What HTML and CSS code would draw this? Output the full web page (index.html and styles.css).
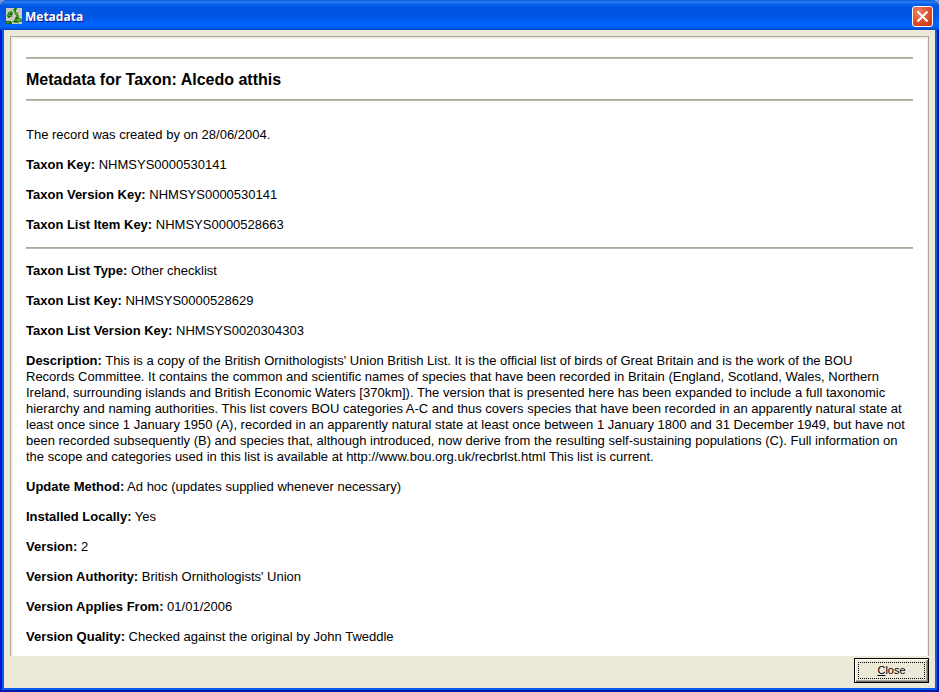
FILE: index.html
```html
<!DOCTYPE html>
<html lang="en">
<head>
<meta charset="utf-8">
<title>Metadata</title>
<link rel="stylesheet" href="styles.css">
</head>
<body>
<div class="window">
  <header class="titlebar">
    <svg class="app-icon" viewBox="0 0 16 16" shape-rendering="crispEdges" aria-hidden="true">
      <rect width="16" height="16" fill="#ccc9c2"/>
      <path fill="#3d9428" d="M2 4h2v-1h2v1h1v3h-1v2h-2v1h-2v-1h-1v-3h1zM8 0h3v2h-1v2h2v3h1v3h2v1h1v3h-3v1h-5v-1h-2v-1h2v-2h1v-2h1v-2h-1v-2h-1v-2h-1v-2h1z"/>
      <path fill="#1a6a16" d="M4 5h2v2h-2zM9 0h1v3h-1zM10 9h2v2h-2zM8 13h3v1h-3zM2 8h2v1h-2zM0 13h5v1h1v2h-6z"/>
      <path fill="#8aa23a" d="M10 4h1v2h-1zM12 11h2v2h-2zM3 7h1v1h-1zM1 14h2v1h-2z"/>
    </svg>
    <h1 class="title">Metadata</h1>
    <button class="close-x" type="button" aria-label="Close window">
      <svg viewBox="0 0 19 19" aria-hidden="true"><path d="M4.500 4.500l10 10M14.500 4.500l-10 10" stroke="#fff" stroke-width="2"/></svg>
    </button>
  </header>
  <div class="client">
    <main class="document">
      <hr>
      <h2>Metadata for Taxon: Alcedo atthis</h2>
      <hr>
      <p class="intro">The record was created by on 28/06/2004.</p>
      <p><b>Taxon Key:</b> NHMSYS0000530141</p>
      <p><b>Taxon Version Key:</b> NHMSYS0000530141</p>
      <p><b>Taxon List Item Key:</b> NHMSYS0000528663</p>
      <hr>
      <p><b>Taxon List Type:</b> Other checklist</p>
      <p><b>Taxon List Key:</b> NHMSYS0000528629</p>
      <p><b>Taxon List Version Key:</b> NHMSYS0020304303</p>
      <p><b>Description:</b> This is a copy of the British Ornithologists' Union British List. It is the official list of birds of Great Britain and is the work of the BOU<br>
        Records Committee. It contains the common and scientific names of species that have been recorded in Britain (England, Scotland, Wales, Northern<br>
        Ireland, surrounding islands and British Economic Waters [370km]). The version that is presented here has been expanded to include a full taxonomic<br>
        hierarchy and naming authorities. This list covers BOU categories A-C and thus covers species that have been recorded in an apparently natural state at<br>
        least once since 1 January 1950 (A), recorded in an apparently natural state at least once between 1 January 1800 and 31 December 1949, but have not<br>
        been recorded subsequently (B) and species that, although introduced, now derive from the resulting self-sustaining populations (C). Full information on<br>
        the scope and categories used in this list is available at http://www.bou.org.uk/recbrlst.html This list is current.</p>
      <p><b>Update Method:</b> Ad hoc (updates supplied whenever necessary)</p>
      <p><b>Installed Locally:</b> Yes</p>
      <p><b>Version:</b> 2</p>
      <p><b>Version Authority:</b> British Ornithologists' Union</p>
      <p><b>Version Applies From:</b> 01/01/2006</p>
      <p><b>Version Quality:</b> Checked against the original by John Tweddle</p>
    </main>
    <footer class="actions">
      <button class="close" type="button"><span class="focus"><u>C</u>lose</span></button>
    </footer>
  </div>
</div>
</body>
</html>
```
FILE: styles.css
```css
* { box-sizing: border-box; }

body {
  margin: 0;
  background: #7a96df;
  color: #000;
  font: 13px/16px "Liberation Sans", Arial, sans-serif;
}

.window {
  display: flex;
  flex-direction: column;
  min-height: 100vh;
  padding: 0 4px 4px;
  border-radius: 8px 8px 0 0;
  background: #0a5bea;
  box-shadow: inset 2px 0 #0013cf, inset -2px -2px #0018a6;
}

.titlebar {
  display: flex;
  align-items: center;
  height: 30px;
  margin: 0 -4px;
  padding: 2px 6px 0;
  gap: 3px;
  border-radius: 8px 8px 0 0;
  background: linear-gradient(#0a58d8 0, #2a80f4 2px, #0a62ea 4px, #0056e2 7px, #0054e0 14px, #005cf2 20px, #0066ff 26px, #0058e8 28px, #0040c0 30px);
}

.app-icon { width: 16px; height: 16px; }

.title {
  flex: 1;
  margin: 0;
  padding-top: 2px;
  color: #fff;
  font: bold 12px/16px "Open Sans", "Noto Sans", sans-serif;
  text-shadow: 1px 1px #0f1089;
}

.close-x {
  width: 21px;
  height: 21px;
  padding: 0;
  border: 1px solid #fff;
  border-radius: 3px;
  background: radial-gradient(circle at 30% 25%, #ea8468, #de4c28 55%, #c33508);
}

.close-x svg { display: block; width: 19px; height: 19px; }

.client {
  display: flex;
  flex: 1;
  flex-direction: column;
  padding: 6px 6px 0;
  background: #ece9d8;
}

.document {
  flex: 1;
  padding: 20px 15px 0;
  border: solid #aca899;
  border-width: 1px 1px 0;
  background: #fff;
  box-shadow: inset 2px 2px #f1efe2, inset -1px 0 #f1efe2;
}

hr {
  height: 2px;
  margin: 0;
  border: 0;
  border-top: 1px solid #aca899;
  background: #b9b9b4;
}

h2 {
  margin: 11px 0 9px;
  font-size: 16px;
  line-height: 20px;
}

p { margin: 14px 0; }

.intro { margin-top: 26px; }

.document p:last-child { margin-bottom: 0; }

.actions {
  display: flex;
  justify-content: flex-end;
  padding: 2px 0 5px;
}

.close {
  width: 75px;
  height: 25px;
  padding: 3px;
  border: 1px solid #000;
  border-radius: 0;
  background: #ece9d8;
  box-shadow: inset 1px 1px #fff, inset -1px -1px #716f64, inset -2px -2px #aca899;
  color: #000;
  font: 11px/15px "Liberation Sans", Arial, sans-serif;
}

.focus {
  display: block;
  border: 1px dotted #000;
}
```
